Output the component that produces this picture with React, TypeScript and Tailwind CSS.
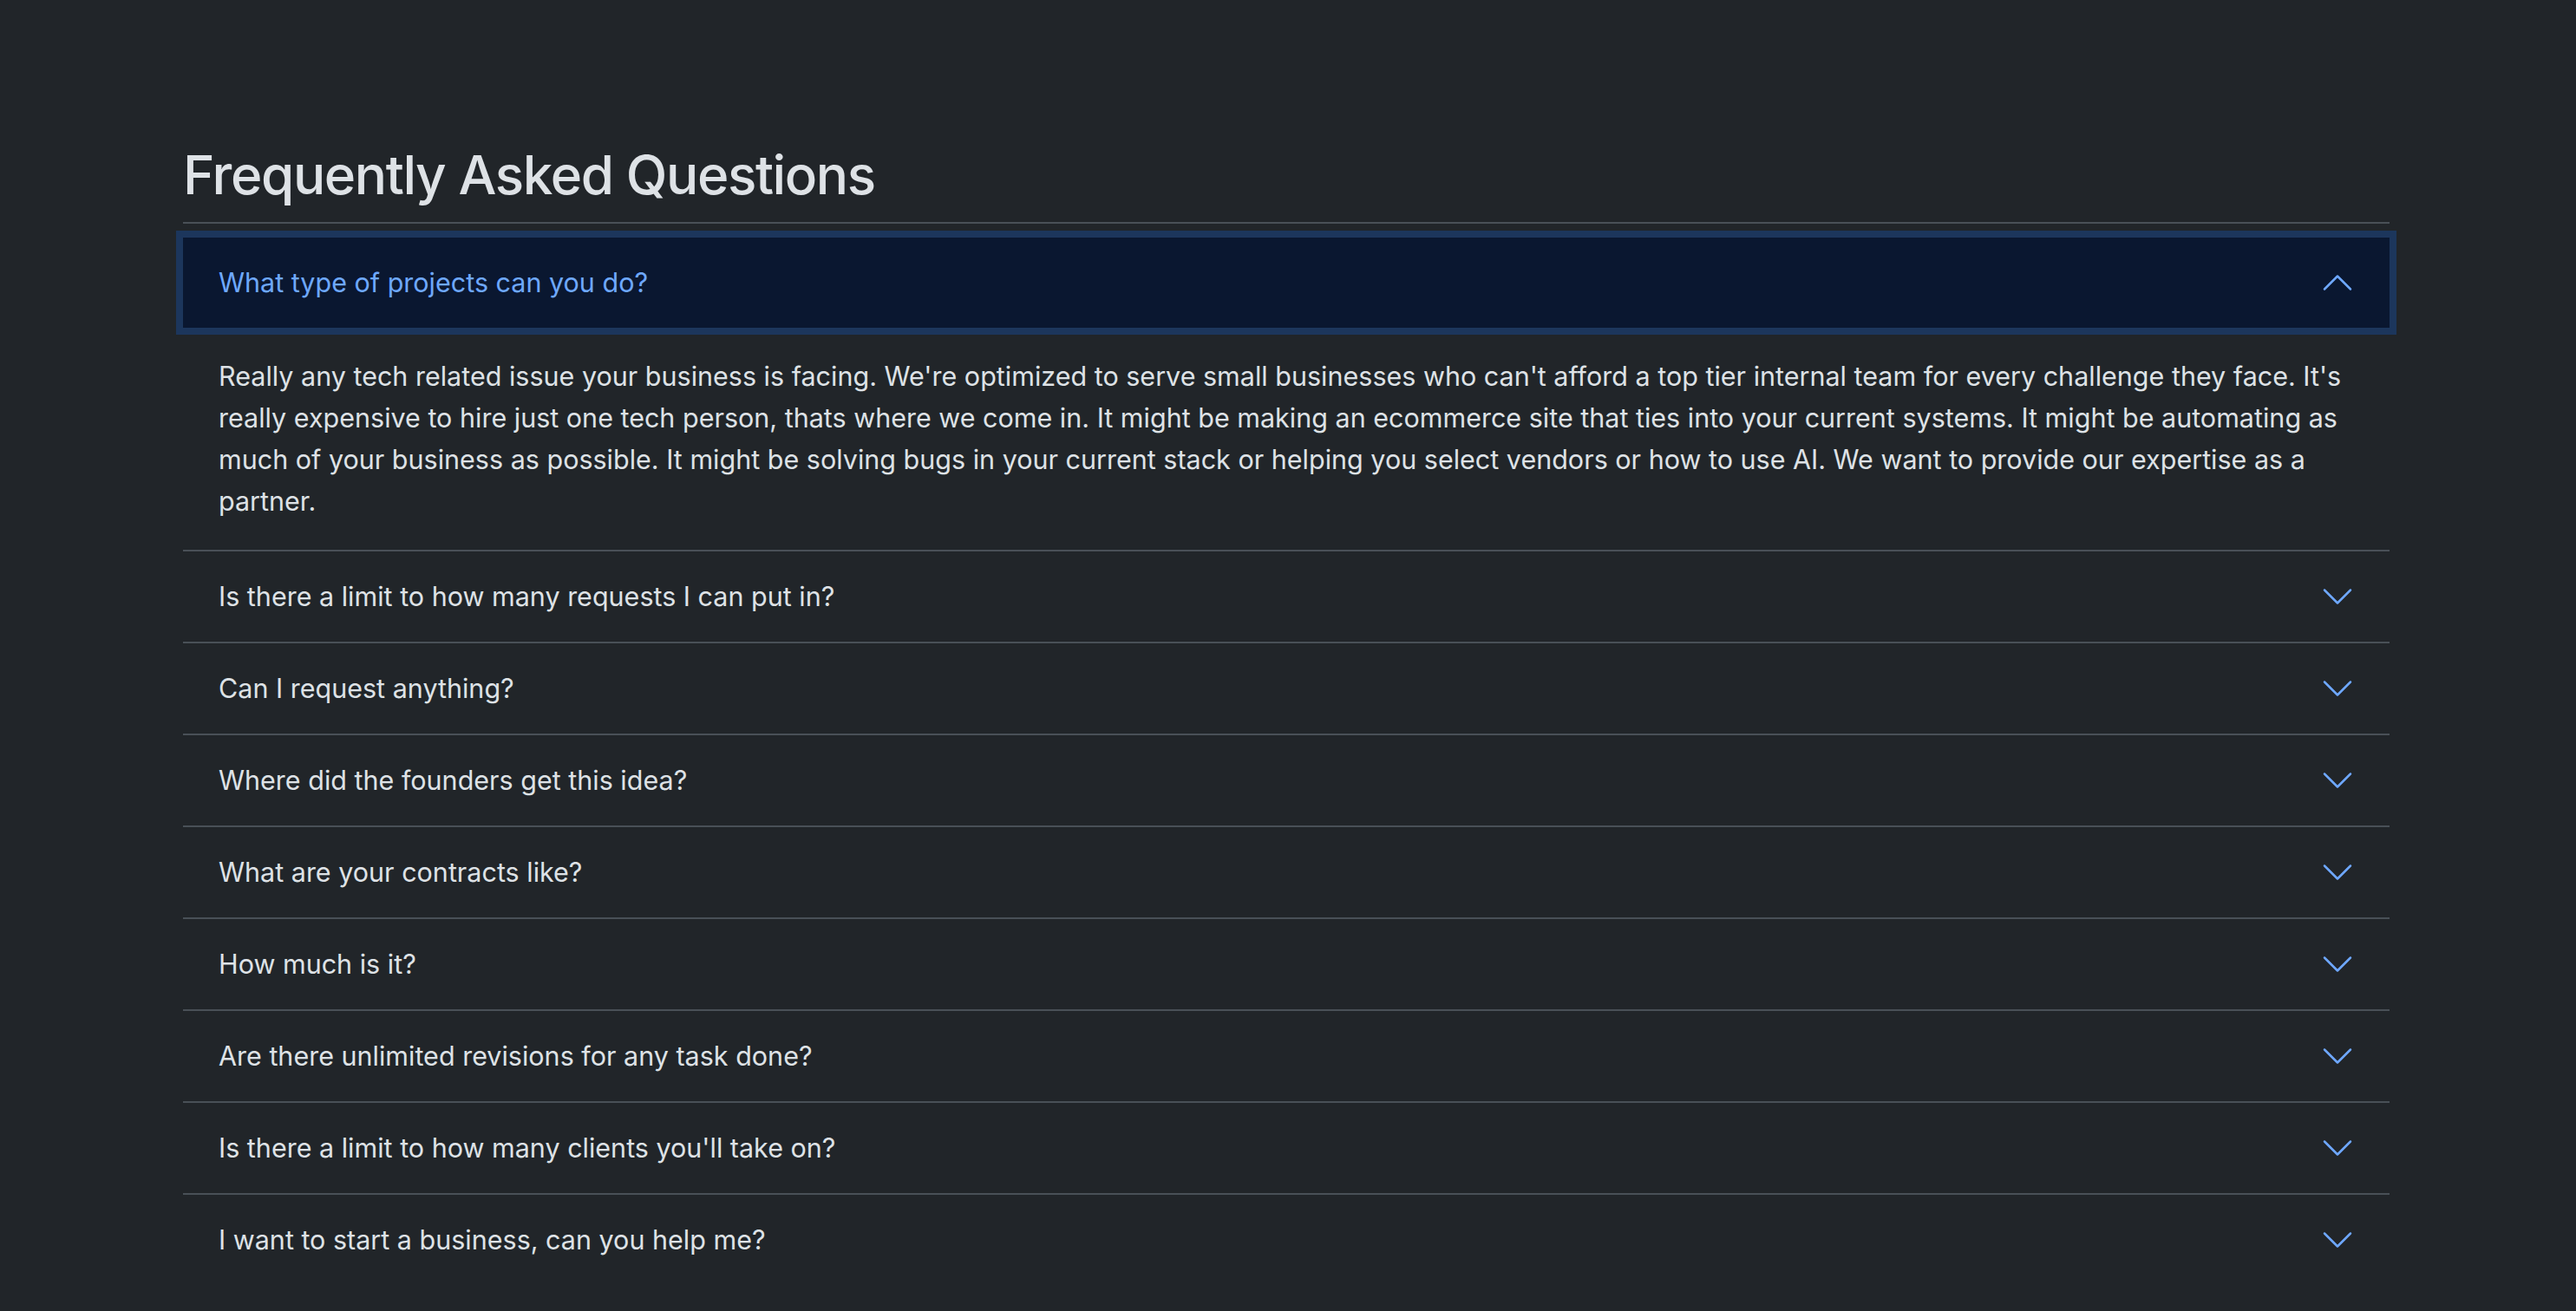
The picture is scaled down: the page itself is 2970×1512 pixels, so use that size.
const faqs = [
  'Is there a limit to how many requests I can put in?',
  'Can I request anything?',
  'Where did the founders get this idea?',
  'What are your contracts like?',
  'How much is it?',
  'Are there unlimited revisions for any task done?',
  "Is there a limit to how many clients you'll take on?",
  'I want to start a business, can you help me?',
]

function Chevron({ up = false }: { up?: boolean }) {
  return (
    <svg
      width="40"
      height="40"
      viewBox="0 0 16 16"
      fill="none"
      stroke="#6ea8fe"
      strokeWidth="1"
      strokeLinecap="round"
      strokeLinejoin="round"
      className="shrink-0"
    >
      <path d={up ? 'M2 11L8 5L14 11' : 'M2 5L8 11L14 5'} />
    </svg>
  )
}

export default function App() {
  return (
    <div className="min-h-screen bg-[#212529] font-['Inter',sans-serif] text-[#dee2e6]">
      <div className="ml-[211px] w-[2544px] pt-[163px]">
        <h2 className="text-[62px] leading-[77px] tracking-[-1.4px] font-medium mb-4">Frequently Asked Questions</h2>
        <div className="h-[2px] bg-[#495057]" />

        <div className="mt-4">
          {/* open item */}
          <div className="border-b-2 border-[#495057]">
            <button className="w-full h-[104px] flex items-center justify-between pl-[41px] pr-[40px] bg-[#0a1730] text-[#6ea8fe] text-[30.5px] leading-[46px] shadow-[0_0_0_8px_#1c365c] text-left">
              <span>What type of projects can you do?</span>
              <Chevron up />
            </button>
            <div className="pl-[41px] pr-[40px] py-[32px] text-[30.5px] leading-[48px]">
              Really any tech related issue your business is facing. We're optimized to serve small businesses who
              can't afford a top tier internal team for every challenge they face. It's really expensive to hire just
              one tech person, thats where we come in. It might be making an ecommerce site that ties into your current
              systems. It might be automating as much of your business as possible. It might be solving bugs in your
              current stack or helping you select vendors or how to use AI. We want to provide our expertise as a
              partner.
            </div>
          </div>

          {faqs.map((q, i) => (
            <div key={q} className={i < faqs.length - 1 ? 'border-b-2 border-[#495057]' : ''}>
              <button className="w-full h-[104px] flex items-center justify-between pl-[41px] pr-[40px] text-[30.5px] leading-[48px] text-left">
                <span>{q}</span>
                <Chevron />
              </button>
            </div>
          ))}
        </div>
      </div>
    </div>
  )
}
